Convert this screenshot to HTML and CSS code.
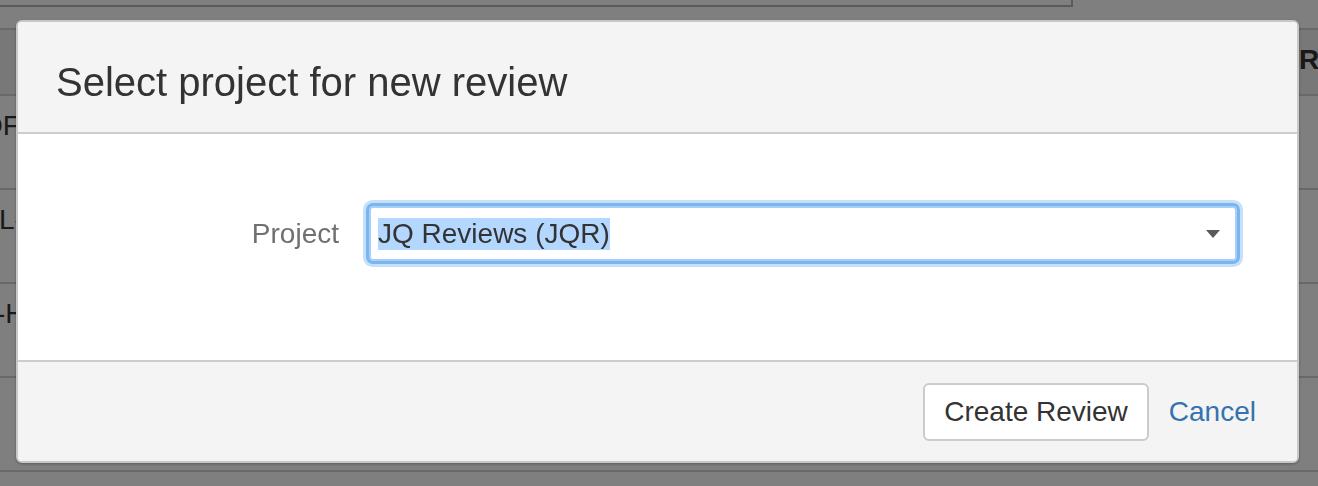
FILE: index.html
```html
<!doctype html>
<html lang="en">
<head>
    <meta charset="UTF-8">
    <title>Select project for new review</title>
    <link rel="stylesheet" href="styles.css">
</head>
<body>
    <!--  page behind the dialog  -->
    <div class="page">
        <div class="topbar"></div>
        <div class="list">
            <div class="row head">
                <div class="cell"></div>
                <div class="cell">Reviewers</div>
            </div>
            <div class="row">
                <div class="cell key key-of">OF-12</div>
                <div class="cell"></div>
            </div>
            <div class="row">
                <div class="cell key key-l">L-7</div>
                <div class="cell"></div>
            </div>
            <div class="row">
                <div class="cell key key-h">-HR</div>
                <div class="cell"></div>
            </div>
            <div class="row">
                <div class="cell"></div>
                <div class="cell"></div>
            </div>
        </div>
    </div>

    <div class="blanket"></div>

    <!--  dialog  -->
    <section class="dialog">
        <header class="dialog-header">
            <h2>Select project for new review</h2>
        </header>
        <div class="dialog-body">
            <form class="field">
                <label class="field-label" for="project">Project</label>
                <div class="select" id="project">
                    <span class="select-value">JQ Reviews (JQR)</span>
                    <svg class="caret" width="14" height="8" viewBox="0 0 14 8">
                        <polygon points="0,0 14,0 7,8" fill="#595959"/>
                    </svg>
                </div>
            </form>
        </div>
        <footer class="dialog-footer">
            <button class="button" type="button">Create Review</button>
            <a class="cancel" href="#">Cancel</a>
        </footer>
    </section>
</body>
</html>
```

FILE: styles.css
```css
* {
    margin: 0;
    padding: 0;
    box-sizing: border-box;
}

html,
body {
    width: 1318px;
    height: 486px;
    overflow: hidden;
}

body {
    font-family: "Liberation Sans", Arial, sans-serif;
    font-size: 28px;
    color: #333;
    background: #fff;
}

/* page behind start */
.topbar {
    width: 1073px;
    height: 7px;
    border-right: 2px solid #b4b4b4;
    border-bottom: 2px solid #b4b4b4;
}

.list {
    width: 1600px;
    margin-top: 21px;
}

.row {
    display: grid;
    grid-template-columns: 1299px 1fr;
    height: 94px;
    border-bottom: 2px solid #d2d2d2;
}

.row.head {
    height: 68px;
    border-top: 2px solid #d2d2d2;
    background: #f0f0f0;
    font-weight: bold;
}

.cell {
    padding-top: 10px;
    line-height: 40px;
    white-space: nowrap;
}

.key-of {
    text-indent: -19px;
}

.key-l {
    text-indent: -1px;
}

.key-h {
    text-indent: -4px;
}
/* page behind end */

.blanket {
    position: fixed;
    top: 0;
    right: 0;
    bottom: 0;
    left: 0;
    background: rgba(0, 0, 0, 0.5);
}

/* dialog start */
.dialog {
    position: fixed;
    top: 20px;
    left: 16px;
    width: 1283px;
    height: 443px;
    display: flex;
    flex-direction: column;
    overflow: hidden;
    background: #fff;
    border: 2px solid #c8c8c8;
    border-radius: 6px;
    box-shadow: 0 1px 3px rgba(0, 0, 0, 0.3);
}

.dialog-header {
    height: 112px;
    padding: 36px 38px 0;
    background: #f4f4f4;
    border-bottom: 2px solid #cccccc;
}

.dialog-header h2 {
    font-size: 40px;
    font-weight: normal;
    line-height: 48px;
    color: #333;
}

.dialog-body {
    flex: 1;
    padding: 72px 60px 0 38px;
}

.field {
    display: flex;
    align-items: center;
    gap: 30px;
}

.field-label {
    width: 283px;
    text-align: right;
    color: #707070;
}

.select {
    display: flex;
    align-items: center;
    width: 868px;
    height: 55px;
    padding: 0 15px 0 7px;
    background: #fff;
    border: 2px solid #a8cff6;
    border-radius: 4px;
    box-shadow: 0 0 0 3px #79b5f1, 0 0 0 6px #c6e0fa;
}

.select-value {
    line-height: 32px;
    background: #b3d7fe;
}

.caret {
    margin-left: auto;
}

.dialog-footer {
    height: 101px;
    display: flex;
    align-items: center;
    justify-content: flex-end;
    gap: 20px;
    padding-right: 41px;
    background: #f4f4f4;
    border-top: 2px solid #cccccc;
}

.button {
    height: 58px;
    padding: 0 19px;
    font: inherit;
    color: #333;
    background: #fff;
    border: 2px solid #cccccc;
    border-radius: 6px;
}

.cancel {
    color: #3572b0;
    text-decoration: none;
}
/* dialog end */
```
